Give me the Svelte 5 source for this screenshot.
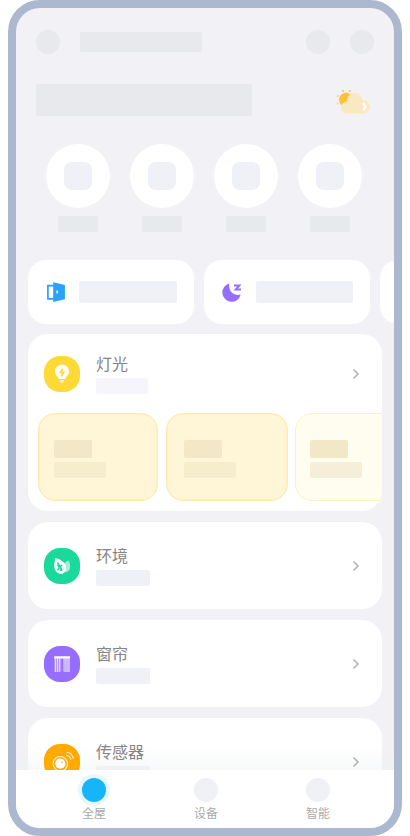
<script>
  const rooms = [
    { name: '环境', kind: 'leaf', color: '#1bd99b' },
    { name: '窗帘', kind: 'curtain', color: '#966eff' },
    { name: '传感器', kind: 'sensor', color: '#ffaa00' }
  ];
  const tabs = [
    { name: '全屋', active: true },
    { name: '设备', active: false },
    { name: '智能', active: false }
  ];
</script>

{#snippet chevron()}
  <svg class="chevron" width="8" height="12" viewBox="0 0 8 12"><path d="M1.500 1.500 6 6 1.500 10.500" fill="none" stroke="#b4b4b4" stroke-width="1.600" /></svg>
{/snippet}

<div class="phone">
  <main>
    <header>
      <i class="dot"></i>
      <i class="title"></i>
      <i class="dot"></i>
      <i class="dot last"></i>
    </header>

    <section class="banner">
      <i></i>
      <svg width="36" height="26" viewBox="0 0 36 26">
        <circle cx="11" cy="10.800" r="7" fill="#ffc136" />
        <g fill="#ffd064">
          <rect x="7" y="1" width="2" height="2" /><rect x="14" y="1" width="2" height="2" />
          <rect x="1.800" y="6.300" width="1.700" height="1.700" /><rect x="1.800" y="13.700" width="1.700" height="1.700" />
        </g>
        <path d="M11.500 24.300a5.400 5.400 0 0 1-5.200-5.500c0-3 2.200-5.300 5.900-5.700C12.500 7.700 15.600 4.300 20 4.300c4 0 6.800 3 7.300 7.100 4.300-.1 7.200 2.600 7.200 6.400 0 3.700-2.900 6.500-6.700 6.500z" fill="#f9e8c4" stroke="#ffebbc" />
        <path d="M28.800 14.700q3 3-.2 5.800" fill="none" stroke="#fff" stroke-width="2.600" stroke-linecap="round" />
      </svg>
    </section>

    <section class="quick">
      {#each [0, 1, 2, 3] as n (n)}
        <div><b><i></i></b><em></em></div>
      {/each}
    </section>

    <section class="scenes">
      <div class="scene">
        <svg width="20" height="22" viewBox="0 0 20 22">
          <path d="M8 4.600H1.900v13.200H8" fill="none" stroke="#2aa1ff" stroke-width="1.700" />
          <path fill-rule="evenodd" d="M7.200 1.200 18.900 4v14.200L7.200 21z M10.400 9.500v3h1.400v-3z" fill="#2aa1ff" />
        </svg>
        <i></i>
      </div>
      <div class="scene second">
        <svg width="20" height="22" viewBox="0 0 20 22">
          <path d="M7.500 2.400A9.300 9.300 0 1 0 18.700 13.500C12.500 15.300 5.600 10.500 7.500 2.400z" fill="#966eff" />
          <path d="M12 4.600h5.300l-3.600 3.900H19" fill="none" stroke="#966eff" stroke-width="2" />
        </svg>
        <i></i>
      </div>
      <div class="scene"></div>
    </section>

    <section class="card lights">
      <div class="row">
        <span class="badge" style:background="#ffd935">
          <svg width="36" height="36" viewBox="0 0 36 36">
            <path d="M14.700 23c0-2.200-3.700-3.600-3.700-7.500a7 7 0 0 1 14 0c0 3.900-3.700 5.300-3.700 7.500z" fill="#fff" />
            <path d="M15.600 23.900h4.800l-.6 2.200q-1.800 1.800-3.600 0z" fill="#fff1b0" />
            <path d="m18.800 12.700-2.200 3.600h3l-2.200 4" fill="none" stroke="#ffd935" stroke-width="1.800" />
          </svg>
        </span>
        <div class="copy"><h2>灯光</h2><i></i></div>
        {@render chevron()}
      </div>
      <div class="lamps">
        <div class="lamp"><i></i><em></em></div>
        <div class="lamp wide"><i></i><em></em></div>
        <div class="lamp off"><i></i><em></em></div>
      </div>
    </section>

    {#each rooms as room (room.kind)}
      <section class="card room">
        <div class="row">
          <span class="badge" style:background={room.color}>
            <svg width="36" height="36" viewBox="0 0 36 36">
              {#if room.kind === 'leaf'}
                <path d="M20 15.500q2.500-2.800 5-2.700 2 5.600.4 9.200-1.700 2.700-6 2z" fill="#a5efd5" />
                <path d="M11.200 10C15.500 10.700 21 14.200 22 18.500c.7 4.100-1.600 7.300-4.900 7.300-3.700 0-6.700-3.300-6.900-7.500-.1-3 .8-5 1-8.300z" fill="#fff" />
                <path d="m13.400 14.300 4.800 8.200m-4.700-.3 1.800-2.400 3-3m-5-.2 2 2.500m.2 3 2.900.2" fill="none" stroke="#1bd99b" stroke-width="1.500" />
              {:else if room.kind === 'curtain'}
                <path d="M10.200 10.200h15.800v2.300H10.200z" fill="#fff" />
                <path d="M11.300 12v14M13.300 12v14M15.300 12v14M21 12v14M23 12v14M25 12v14" stroke="#fff" stroke-opacity=".82" stroke-width="1.250" />
                <path d="M16.800 12v13.500M19.500 12v13.500" stroke="#fff" stroke-opacity=".6" stroke-width=".7" />
              {:else}
                <circle cx="16.300" cy="19.700" r="7.200" fill="none" stroke="#fff" stroke-opacity=".85" stroke-width="1.100" />
                <circle cx="16.300" cy="19.700" r="5.100" fill="#fff" />
                <circle cx="18" cy="18.200" r=".8" fill="#ffaa00" />
                <path d="M22 11.300q4.200.4 4.800 4.600M22.300 8.300q6 .4 7 6.400" fill="none" stroke="#fff" stroke-opacity=".8" stroke-width="1.100" />
              {/if}
            </svg>
          </span>
          <div class="copy"><h2>{room.name}</h2><i></i></div>
          {@render chevron()}
        </div>
      </section>
    {/each}
  </main>

  <nav>
    {#each tabs as tab (tab.name)}
      <div class:active={tab.active}><i></i><span>{tab.name}</span></div>
    {/each}
  </nav>
</div>

<style>
  :global(body) { background: #fff; }
  * { box-sizing: border-box; }
  i, em, b { display: block; flex: none; }
  svg { display: block; flex: none; }
  .phone {
    width: 394px; height: 836px; margin-left: 8px;
    border: 8px solid #abb8cf; border-radius: 32px;
    background: #f2f1f6; overflow: hidden;
    display: flex; flex-direction: column;
    font-family: "Noto Sans CJK SC", sans-serif;
  }
  main { height: 762px; flex: none; overflow: hidden; position: relative; }
  main::after {
    content: ''; position: absolute; inset: auto 0 0; height: 24px;
    background: linear-gradient(rgba(244, 247, 247, 0), rgba(238, 241, 242, .45));
  }
  header { display: flex; align-items: center; padding: 22px 20px 0; height: 46px; }
  .dot { width: 24px; height: 24px; border-radius: 50%; background: #e7e9ed; }
  .title { width: 122px; height: 20px; margin: 0 104px 0 20px; border-radius: 2px; background: #e7e9ed; }
  .last { margin-left: 20px; }
  .banner { display: flex; justify-content: space-between; padding: 30px 23px 0 20px; height: 62px; }
  .banner i { width: 216px; height: 32px; border-radius: 2px; background: #e7e9ed; }
  .banner svg { margin-top: 5px; }
  .quick { display: flex; gap: 20px; padding: 28px 30px 0; }
  .quick div { display: flex; flex-direction: column; align-items: center; gap: 8px; }
  .quick b { width: 64px; height: 64px; border-radius: 50%; background: #fff; padding: 18px; }
  .quick i { width: 28px; height: 28px; border-radius: 8px; background: #f0f1f7; }
  .quick em { width: 40px; height: 16px; border-radius: 2px; background: #e7e9ed; }
  .scenes { display: flex; gap: 10px; padding: 28px 0 0 12px; }
  .scene {
    flex: none; width: 166px; height: 64px; border-radius: 18px; background: #fff;
    display: flex; align-items: center; gap: 13px; padding-left: 18px;
  }
  .second { gap: 13.500px; }
  .scene i { width: 98px; height: 22px; border-radius: 2px; background: #f0f1f7; }
  .second i { width: 97.500px; }
  .card { width: 354px; margin: 10.300px 0 0 12px; background: #fff; border-radius: 20px; overflow: hidden; }
  .lights { height: 177.300px; margin-top: 10px; padding-top: 18px; }
  .room { height: 87.700px; padding-top: 22px; }
  .row { position: relative; z-index: 1; display: flex; align-items: center; height: 44px; padding: 0 22px 0 16px; }
  .badge { width: 36px; height: 36px; border-radius: 16px; flex: none; }
  .copy { flex: 1; margin: -2px 0 0 16px; }
  h2 { margin: -1px 0 3px; font-size: 16px; line-height: 24px; font-weight: 400; color: #858585; }
  .copy i { width: 54px; height: 16px; border-radius: 2px; background: #f0f1f7; }
  .lights .copy i { width: 52px; background: #f5f5fb; }
  .lamps { display: flex; padding: 17.400px 0 0 10px; gap: 7.500px; }
  .lamp {
    flex: none; width: 120px; height: 88px; padding: 25.500px 0 0 15px;
    border: 1px solid #ffebad; border-radius: 17px; background: #fff5d7;
    box-shadow: inset 0 0 0 .5px #ffebad;
  }
  .lamp i { width: 38px; height: 18px; margin-bottom: 4px; border-radius: 2px; background: #f2e7c7; }
  .lamp em { width: 52px; height: 16px; border-radius: 2px; background: #f6edcd; }
  .wide { width: 122px; padding-left: 17.500px; }
  .off { background: #fffcf0; border-color: #fff0c2; padding-left: 14px; box-shadow: none; }
  .off em { background: #f6eed9; }
  nav { flex: 1; display: flex; justify-content: center; gap: 48px; background: #fff; padding: 8px 0 0 2px; }
  nav div { width: 64px; display: flex; flex-direction: column; align-items: center; }
  nav i { width: 24px; height: 24px; border-radius: 50%; background: #f0f1f7; }
  nav .active i { background: #16b5fa; box-shadow: 0 0 0 4px #e6f7fe; }
  nav .active { position: relative; }
  nav span { margin-top: 2px; font-size: 12px; line-height: 18px; color: #aaa; }
</style>
